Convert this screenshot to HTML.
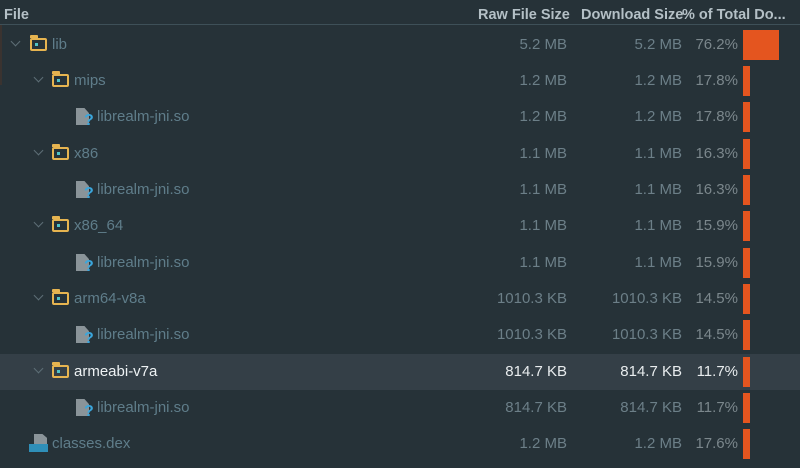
<!DOCTYPE html><html><head><style>
body{margin:0;width:800px;height:468px;background:#263238;font-family:"Liberation Sans",sans-serif;overflow:hidden;position:relative}
.h{position:absolute;top:0;left:0;width:800px;height:24px;border-bottom:1px solid #3e5058;color:#b4c0c6;font-weight:bold;font-size:14.5px}
.h span{position:absolute;top:7px}
.r{position:absolute;left:0;width:800px;height:36px;font-size:15px;color:#6c7f88}
.r.sel{background:#343f47;color:#e8ecee}
.r span{position:absolute;top:9px}
.n{color:#5f7d8a}.sel .n{color:#eef2f4}
.a{right:233px}.b{right:118px}.p{right:62px;color:#7b878c}.sel .p{color:#e8ecee}
.bar{position:absolute;left:743px;top:3px;width:7px;height:30px;background:#e4551f}
.chev{position:absolute;top:11px;width:6px;height:6px;border-right:1.5px solid #5d6e76;border-bottom:1.5px solid #5d6e76;transform:rotate(45deg)}
.fold{position:absolute;top:11px;width:17px;height:13px;border:2px solid #e6b450;border-radius:2px;box-sizing:border-box}
.fold:before{content:"";position:absolute;left:-2px;top:-5px;width:8px;height:3px;background:#e6b450;border-radius:1px 1px 0 0}
.fold:after{content:"";position:absolute;left:3px;top:3px;width:3px;height:3px;background:#4fc3c7}
.file{position:absolute;top:9px;width:13px;height:17px;background:#8a9499;clip-path:polygon(0 0,65% 0,100% 30%,100% 100%,0 100%)}
.q{position:absolute;top:13px;color:#3aa6dc;font-weight:bold;font-size:16px}
</style></head><body>
<div style="position:absolute;left:0;top:25px;width:2px;height:60px;background:#3a3330"></div>
<div class="h"><span style="left:4px">File</span><span style="left:478px">Raw File Size</span><span style="left:581px">Download Size</span><span style="left:682px">% of Total Do...</span></div>

<div class="r" style="top:27px"><i class="chev" style="left:12px"></i><i class="fold" style="left:30px"></i><span class="n" style="left:52px">lib</span><span class="a">5.2 MB</span><span class="b">5.2 MB</span><span class="p">76.2%</span><div class="bar" style="width:36px"></div></div>
<div class="r" style="top:63px"><i class="chev" style="left:35px"></i><i class="fold" style="left:52px"></i><span class="n" style="left:74px">mips</span><span class="a">1.2 MB</span><span class="b">1.2 MB</span><span class="p">17.8%</span><div class="bar"></div></div>
<div class="r" style="top:99px"><i class="file" style="left:76px"></i><b class="q" style="left:84px">?</b><span class="n" style="left:97px">librealm-jni.so</span><span class="a">1.2 MB</span><span class="b">1.2 MB</span><span class="p">17.8%</span><div class="bar"></div></div>
<div class="r" style="top:136px"><i class="chev" style="left:35px"></i><i class="fold" style="left:52px"></i><span class="n" style="left:74px">x86</span><span class="a">1.1 MB</span><span class="b">1.1 MB</span><span class="p">16.3%</span><div class="bar"></div></div>
<div class="r" style="top:172px"><i class="file" style="left:76px"></i><b class="q" style="left:84px">?</b><span class="n" style="left:97px">librealm-jni.so</span><span class="a">1.1 MB</span><span class="b">1.1 MB</span><span class="p">16.3%</span><div class="bar"></div></div>
<div class="r" style="top:208px"><i class="chev" style="left:35px"></i><i class="fold" style="left:52px"></i><span class="n" style="left:74px">x86_64</span><span class="a">1.1 MB</span><span class="b">1.1 MB</span><span class="p">15.9%</span><div class="bar"></div></div>
<div class="r" style="top:245px"><i class="file" style="left:76px"></i><b class="q" style="left:84px">?</b><span class="n" style="left:97px">librealm-jni.so</span><span class="a">1.1 MB</span><span class="b">1.1 MB</span><span class="p">15.9%</span><div class="bar"></div></div>
<div class="r" style="top:281px"><i class="chev" style="left:35px"></i><i class="fold" style="left:52px"></i><span class="n" style="left:74px">arm64-v8a</span><span class="a">1010.3 KB</span><span class="b">1010.3 KB</span><span class="p">14.5%</span><div class="bar"></div></div>
<div class="r" style="top:317px"><i class="file" style="left:76px"></i><b class="q" style="left:84px">?</b><span class="n" style="left:97px">librealm-jni.so</span><span class="a">1010.3 KB</span><span class="b">1010.3 KB</span><span class="p">14.5%</span><div class="bar"></div></div>
<div class="r sel" style="top:354px"><i class="chev" style="left:35px"></i><i class="fold" style="left:52px"></i><span class="n" style="left:74px">armeabi-v7a</span><span class="a">814.7 KB</span><span class="b">814.7 KB</span><span class="p">11.7%</span><div class="bar"></div></div>
<div class="r" style="top:390px"><i class="file" style="left:76px"></i><b class="q" style="left:84px">?</b><span class="n" style="left:97px">librealm-jni.so</span><span class="a">814.7 KB</span><span class="b">814.7 KB</span><span class="p">11.7%</span><div class="bar"></div></div>
<div class="r" style="top:426px"><i class="file" style="left:34px;top:8px;height:13px"></i><i style="position:absolute;left:29px;top:18px;width:19px;height:8px;background:#2f8fb8"></i><span class="n" style="left:52px">classes.dex</span><span class="a">1.2 MB</span><span class="b">1.2 MB</span><span class="p">17.6%</span><div class="bar"></div></div>
</body></html>
